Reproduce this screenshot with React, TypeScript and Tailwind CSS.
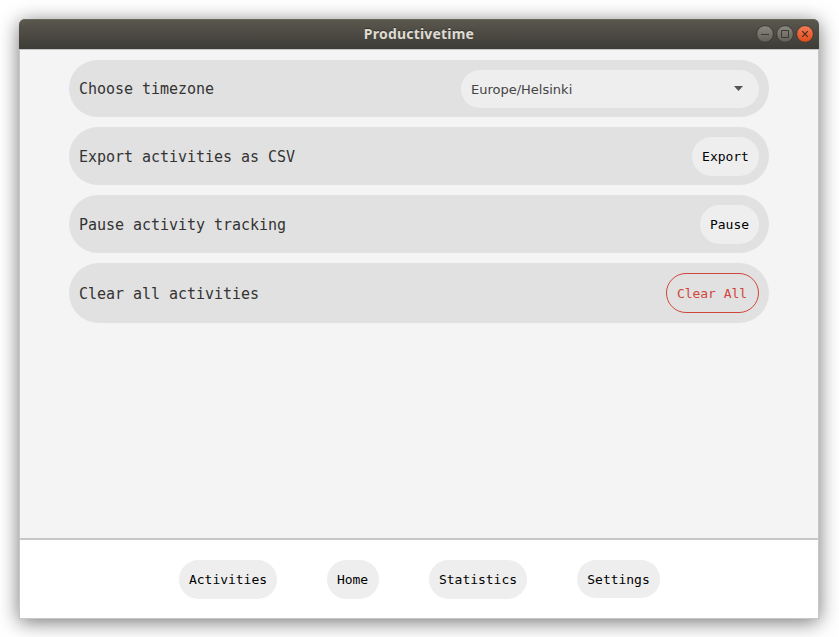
import type { ReactNode } from "react";

const mono = "font-['DejaVu_Sans_Mono','Liberation_Mono',monospace]";

function Row({ label, className, children }: { label: string; className: string; children: ReactNode }) {
  return (
    <div className={`flex w-full items-center justify-between rounded-[30px] bg-[#e1e1e1] px-2.5 ${className}`}>
      <span className={`${mono} pt-px text-[15px] leading-5 tracking-[-0.03px] text-[#333]`}>{label}</span>
      {children}
    </div>
  );
}

function Pill({ children, className }: { children: ReactNode; className: string }) {
  return (
    <button
      className={`${mono} flex shrink-0 items-center justify-center whitespace-nowrap rounded-[20px] text-[13px] leading-[17px] tracking-[-0.03px] ${className}`}
    >
      {children}
    </button>
  );
}

function WindowControls() {
  return (
    <svg width="60" height="22" viewBox="0 0 60 22" fill="none">
      <defs>
        <linearGradient id="grey" x1="0" y1="0" x2="0" y2="1">
          <stop stopColor="#8b897f" />
          <stop offset="1" stopColor="#605e57" />
        </linearGradient>
        <linearGradient id="orange" x1="0" y1="0" x2="0" y2="1">
          <stop stopColor="#f47d56" />
          <stop offset="1" stopColor="#df4b19" />
        </linearGradient>
      </defs>
      <circle cx="10" cy="11" r="8.4" fill="url(#grey)" stroke="#3b3a35" />
      <circle cx="30" cy="11" r="8.4" fill="url(#grey)" stroke="#3b3a35" />
      <circle cx="50" cy="11" r="8.4" fill="url(#orange)" stroke="#3b3a35" />
      <path d="M6 11.5h8M26.5 7.5h7v7h-7z" stroke="#3b3a35" />
      <path d="m47.2 8.2 5.6 5.6m0-5.6-5.6 5.6" stroke="#4b2b1d" strokeWidth="1.2" />
    </svg>
  );
}

export default function App() {
  return (
    <div className="h-[637px] w-[839px] overflow-hidden bg-white px-[19px] pt-[19px]">
      <div className="flex h-[600px] w-[800px] flex-col rounded-t-[6px] shadow-[0_3px_20px_rgba(0,0,0,0.55)]">
        <header className="grid h-[30px] shrink-0 grid-cols-[1fr_auto_1fr] items-center rounded-t-[6px] bg-linear-to-b from-[#5b584e] to-[#3d3c37] shadow-[inset_0_1px_0_#68655a]">
          <span />
          <h1 className="font-['Noto_Sans','Open_Sans',sans-serif] text-[14px] leading-[20px] font-bold tracking-[0.2px] text-[#dfdbd2] [text-shadow:0_-1px_0_#33322e]">
            Productivetime
          </h1>
          <div className="flex justify-end pr-1">
            <WindowControls />
          </div>
        </header>
        <div className="flex flex-1 flex-col border border-[#c7c7c7] bg-[#f4f4f4]">
          <main className="flex flex-1 flex-col gap-2.5 px-[49px] pt-2.5">
            <Row label="Choose timezone" className="h-[57px]">
              <button className="flex h-[38px] w-[298px] items-center justify-between rounded-[20px] bg-[#eee] pr-4 pl-2.5 font-['DejaVu_Sans',sans-serif] text-[13px] text-[#444]">
                <span className="pt-[3px]">Europe/Helsinki</span>
                <svg width="9" height="5" viewBox="0 0 9 5">
                  <path d="M0 0h9L4.5 5z" fill="#555" />
                </svg>
              </button>
            </Row>
            <Row label="Export activities as CSV" className="h-[58px]">
              <Pill className="h-[39px] w-[67px] bg-[#eee] text-black">Export</Pill>
            </Row>
            <Row label="Pause activity tracking" className="h-[58px]">
              <Pill className="h-[39px] w-[59px] bg-[#eee] text-black">Pause</Pill>
            </Row>
            <Row label="Clear all activities" className="h-[60px]">
              <Pill className="h-10 w-[93px] border border-[#d0453b] pr-px text-[#d0453b]">Clear All</Pill>
            </Row>
          </main>
          <nav className="flex h-20 shrink-0 items-start justify-center gap-[50px] border-t-2 border-[#c7c7c7] bg-white pt-5">
            <Pill className="h-[39px] w-[98px] bg-[#eee] pl-px text-black">Activities</Pill>
            <Pill className="h-[39px] w-[52px] bg-[#eee] text-black">Home</Pill>
            <Pill className="h-[39px] w-[98px] bg-[#eee] pl-px text-black">Statistics</Pill>
            <Pill className="h-[38px] w-[83px] bg-[#eee] pl-px text-black">Settings</Pill>
          </nav>
        </div>
      </div>
    </div>
  );
}
